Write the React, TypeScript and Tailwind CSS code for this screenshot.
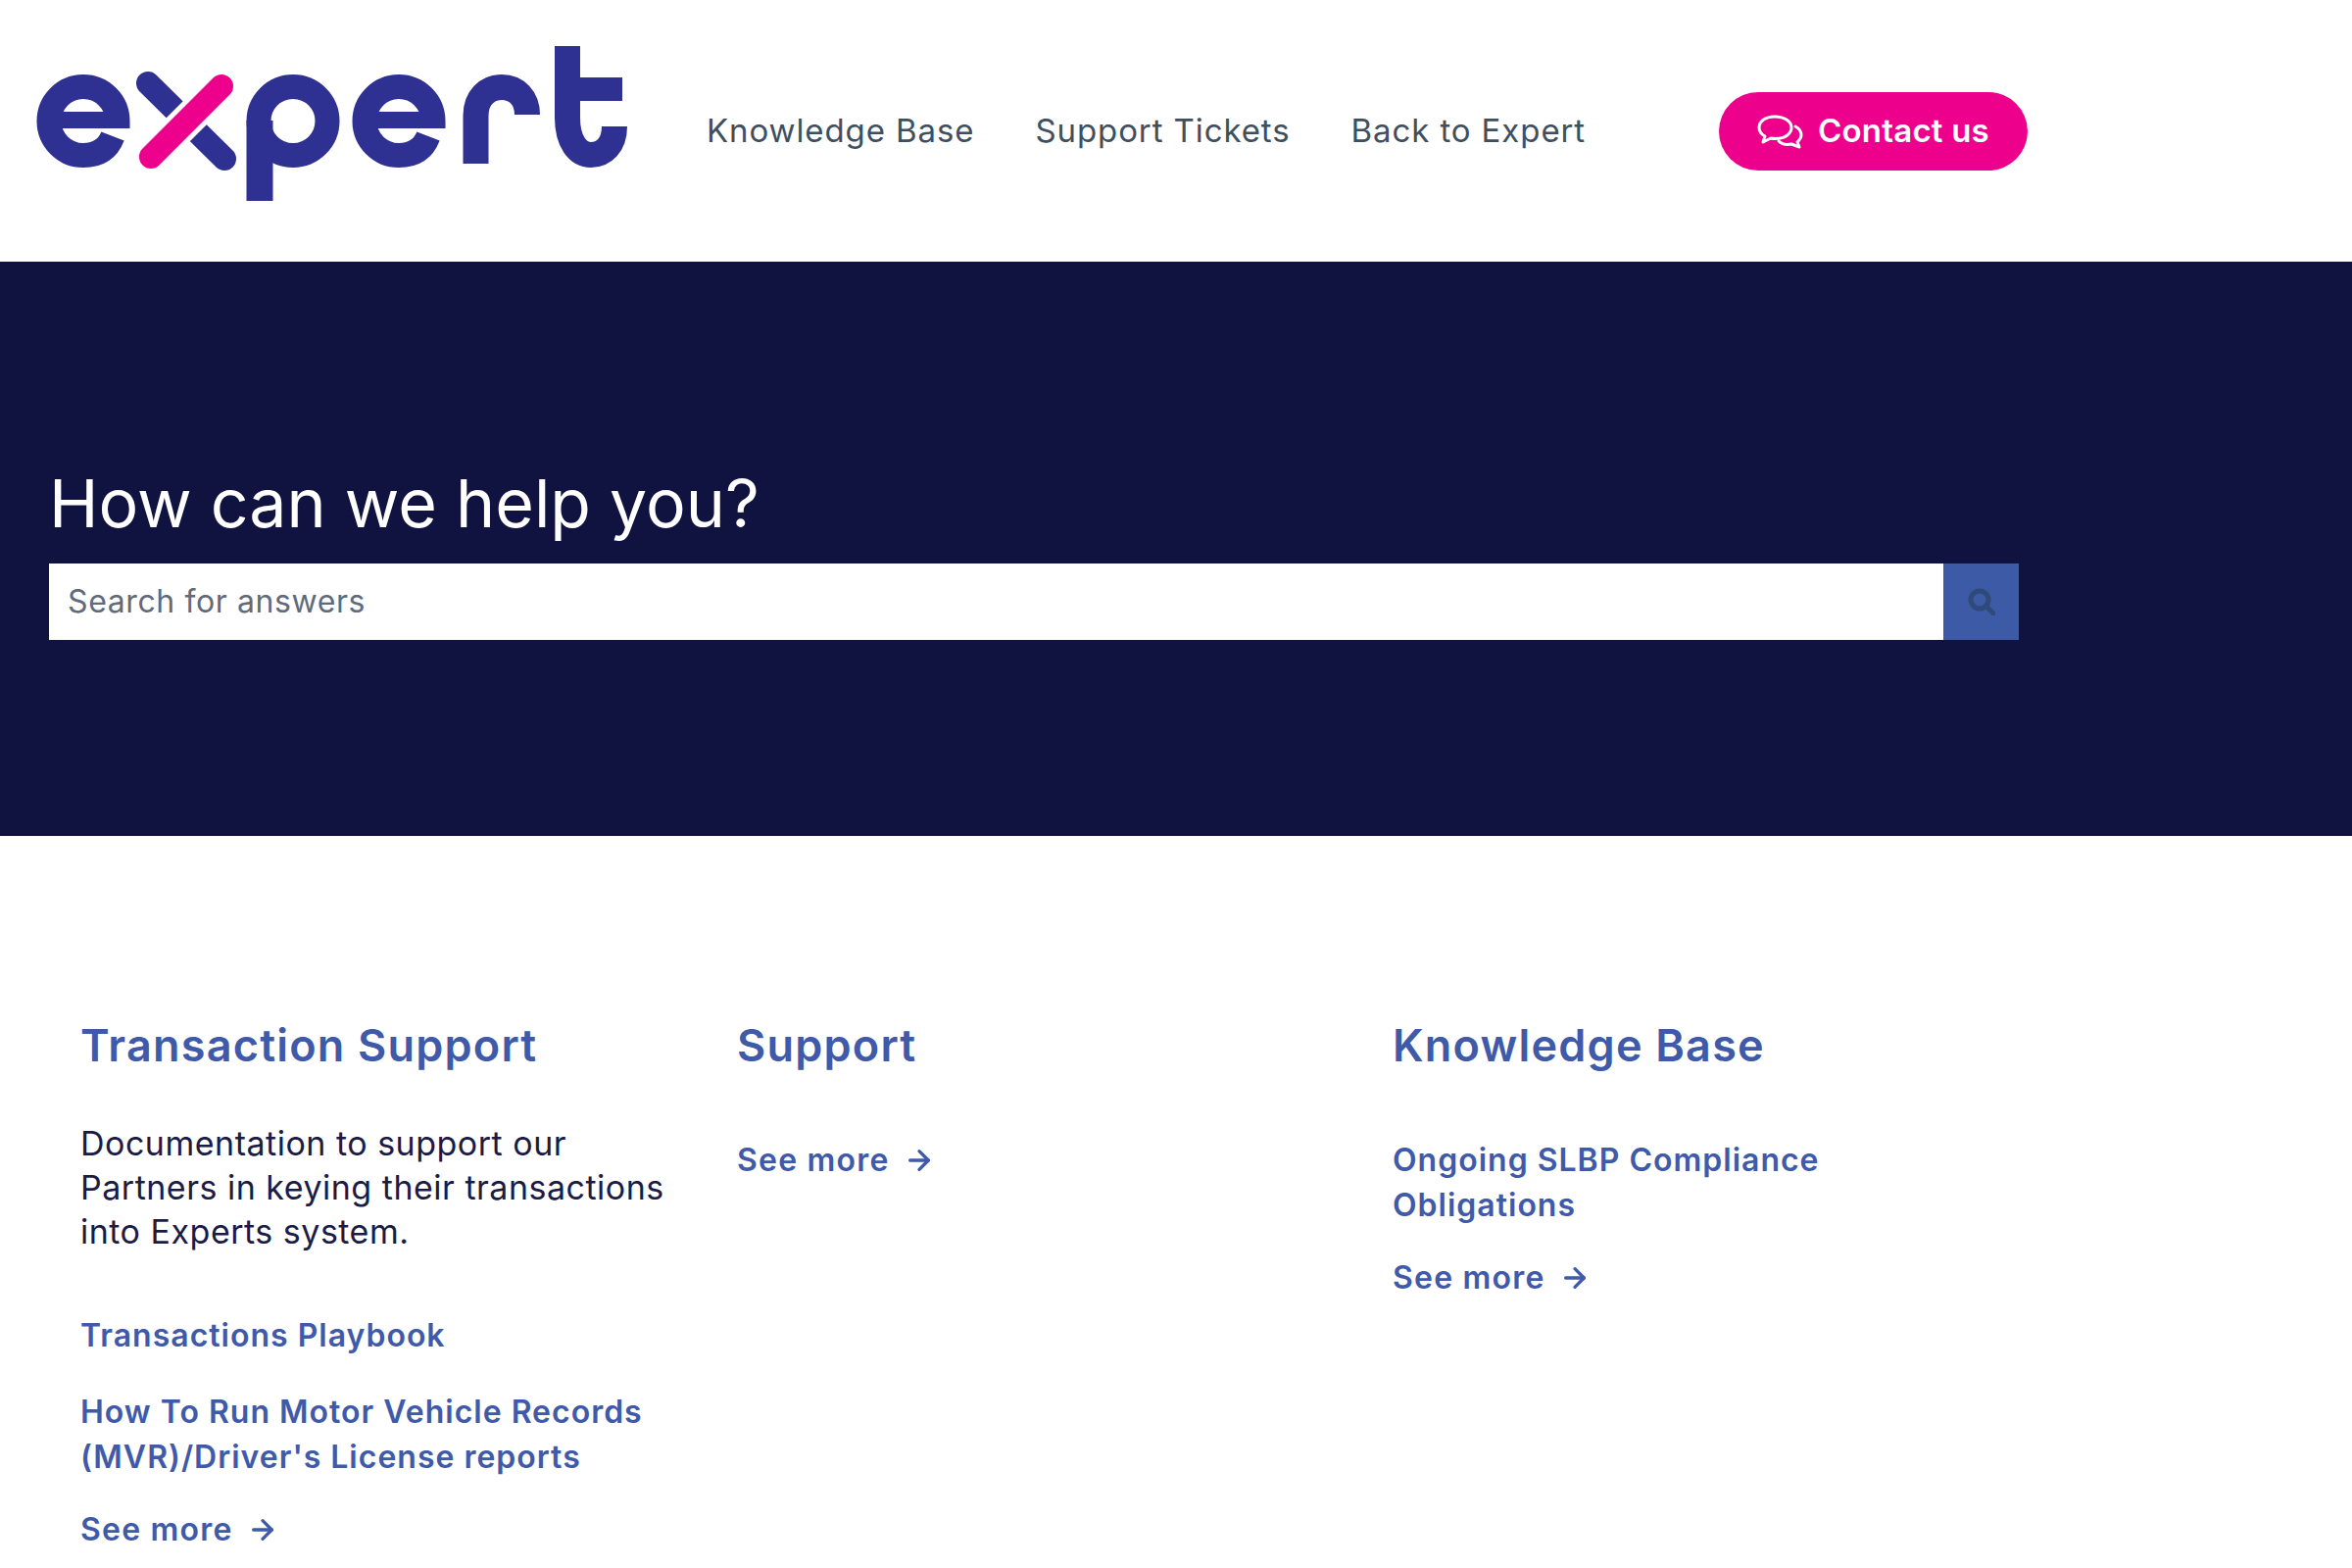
import React from "react";
import { ArrowRight } from "lucide-react";

const font = "[font-family:Inter,'Liberation_Sans',sans-serif]";

function Logo() {
  return (
    <svg width="610" height="267" viewBox="35 0 610 267" fill="none" className="shrink-0">
      <g stroke="#2E3191" strokeWidth="25">
        <path d="M120 131V123A35 35 0 1 0 85 158.500C100 158.500 110 152 115 139" />
        <path d="M55 122.500H120" strokeWidth="17" />
        <path d="M151 85L229 162" strokeLinecap="round" strokeWidth="24" />
        <circle cx="299" cy="123.500" r="35" />
        <path d="M265 205V123" strokeWidth="27" />
        <path d="M442 131V123A35 35 0 1 0 407 158.500C422 158.500 432 152 437 139" />
        <path d="M377 122.500H442" strokeWidth="17" />
        <path d="M485.500 167V118C485.500 100 497 89 512 89C527 89 538 100 538 117" strokeWidth="26" />
        <path d="M579 47V120C579 145 590 158 603 158C616 158 627 148 627 129" strokeWidth="26" />
        <path d="M590 91H635" strokeWidth="24" />
      </g>
      <path d="M226 88L154 160" stroke="#fff" strokeWidth="34" />
      <path d="M226 88L154 160" stroke="#EC008C" strokeWidth="24" strokeLinecap="round" />
    </svg>
  );
}

function ChatIcon() {
  return (
    <svg width="48" height="36" viewBox="0 0 48 36" fill="none" stroke="#fff" strokeWidth="3" strokeLinejoin="round" strokeLinecap="round" className="shrink-0">
      <path d="M19 3C9 3 3 8 3 14C3 18 5 21 9 23L7 29L15 25C17 25.500 18 25.500 20 25.500C30 25.500 36 20 36 14C36 8 29 3 19 3Z" />
      <path d="M40 13C44 15 46 18 46 22C46 25 44 27 42 29L44 34L36 31C31 32 26 31 23 28" />
    </svg>
  );
}

function SeeMore() {
  return (
    <a className="flex items-center gap-[14px] text-[32px] leading-[46px] font-semibold text-[#3F5AA9] tracking-[1.2px]">
      See more
      <ArrowRight size={32} strokeWidth={2.5} />
    </a>
  );
}

function LinkText({ children }: { children: React.ReactNode }) {
  return <a className="block text-[32px] leading-[46px] font-semibold text-[#3F5AA9] tracking-[1px]">{children}</a>;
}

function Title({ children }: { children: React.ReactNode }) {
  return <h2 className="text-[45px] leading-[52px] font-semibold text-[#3F5AA9] tracking-[1.2px]">{children}</h2>;
}

export default function App() {
  return (
    <div className={`w-[2400px] h-[1600px] overflow-hidden bg-white ${font}`}>
      <header className="h-[267px] flex items-center pl-[35px]">
        <Logo />
        <nav className="flex items-center gap-[62px] ml-[76px] text-[33px] text-[#3E4F60] tracking-[0.9px]">
          <a>Knowledge Base</a>
          <a>Support Tickets</a>
          <a>Back to Expert</a>
        </nav>
        <a className="ml-[136px] w-[315px] h-[80px] rounded-full bg-[#EC008C] flex items-center pl-[38px] gap-[15px] text-white text-[33px] font-semibold tracking-[0.2px]">
          <ChatIcon />
          Contact us
        </a>
      </header>

      <section className="h-[586px] bg-[#10123F] pl-[50px] pt-[196px]">
        <h1 className="text-[68px] leading-[100px] mb-[12px] text-white font-normal">How can we help you?</h1>
        <div className="flex w-[2010px] h-[78px]">
          <input
            placeholder="Search for answers"
            className="flex-1 bg-white px-[19px] text-[32px] text-[#5F6B7A] placeholder:text-[#5F6B7A] tracking-[0.6px] outline-none"
          />
          <div className="w-[77px] bg-[#3C5AA6] flex items-center justify-center">
            <svg width="28" height="28" viewBox="0 0 28 28" fill="none" stroke="#2F4A78" strokeWidth="5">
              <circle cx="12" cy="12" r="9" />
              <path d="M18.500 18.500L26 26" strokeLinecap="round" />
            </svg>
          </div>
        </div>
      </section>

      <main className="grid grid-cols-[670px_669px_669px] pl-[82px] pt-[188px]">
        <div className="w-[610px]">
          <Title>Transaction Support</Title>
          <p className="mt-[51px] text-[34px] leading-[45px] text-[#1A1C45] tracking-[0.5px]">
            Documentation to support our Partners in keying their transactions into Experts system.
          </p>
          <div className="mt-[61px]">
            <LinkText>Transactions Playbook</LinkText>
          </div>
          <div className="mt-[32px]">
            <LinkText>How To Run Motor Vehicle Records (MVR)/Driver's License reports</LinkText>
          </div>
          <div className="mt-[28px]">
            <SeeMore />
          </div>
        </div>
        <div>
          <Title>Support</Title>
          <div className="mt-[68px]">
            <SeeMore />
          </div>
        </div>
        <div className="w-[480px]">
          <Title>Knowledge Base</Title>
          <div className="mt-[68px]">
            <LinkText>Ongoing SLBP Compliance Obligations</LinkText>
          </div>
          <div className="mt-[28px]">
            <SeeMore />
          </div>
        </div>
      </main>
    </div>
  );
}
